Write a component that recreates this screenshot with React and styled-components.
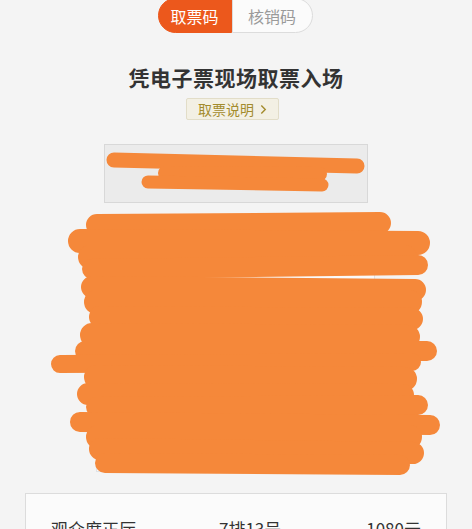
import React from "react";
import styled, { createGlobalStyle } from "styled-components";

const GlobalStyle = createGlobalStyle`
  html, body {
    margin: 0;
    padding: 0;
    overflow: hidden;
    background: #f4f4f4;
    font-family: "Noto Sans CJK SC", "Noto Sans", sans-serif;
  }
`;

// scribble strokes over the ticket codes, page coords: x1, y1, x2, y2, width
const strokes = [
  [114, 163, 357, 169, 15],
  [165, 176, 320, 177, 14],
  [148, 185, 322, 188, 13],
  [97, 228, 380, 226, 22],
  [80, 244, 418, 246, 24],
  [90, 260, 405, 260, 24],
  [92, 272, 418, 268, 20],
  [92, 290, 415, 293, 22],
  [96, 305, 410, 305, 24],
  [100, 320, 412, 322, 22],
  [92, 338, 408, 340, 24],
  [85, 354, 427, 354, 20],
  [60, 367, 412, 365, 18],
  [96, 380, 405, 382, 24],
  [88, 397, 403, 398, 22],
  [96, 410, 418, 408, 20],
  [80, 425, 430, 428, 20],
  [98, 440, 410, 440, 24],
  [100, 452, 413, 456, 22],
  [105, 466, 400, 468, 20],
];

const App = () => {
  return (
    <Page>
      <GlobalStyle />
      <Tabs>
        <Tab active>取票码</Tab>
        <Tab>核销码</Tab>
      </Tabs>
      <Title>凭电子票现场取票入场</Title>
      <HelpButton>
        取票说明
        <Chevron viewBox="0 0 8 12">
          <path d="M1.5 1.5 L6 6 L1.5 10.5" />
        </Chevron>
      </HelpButton>
      <CodeArea>
        <Barcode />
        <QrBox />
        <Scribble viewBox="0 147 472 340">
          {strokes.map(([x1, y1, x2, y2, w], i) => (
            <line key={i} x1={x1} y1={y1} x2={x2} y2={y2} strokeWidth={w} />
          ))}
        </Scribble>
      </CodeArea>
      <InfoCard>
        <Cell>观众席正厅</Cell>
        <Cell>7排13号</Cell>
        <Cell>1080元</Cell>
      </InfoCard>
    </Page>
  );
};

const Page = styled.div`
  width: 472px;
  height: 529px;
  display: flex;
  flex-direction: column;
  align-items: center;
  overflow: hidden;
`;

const Tabs = styled.div`
  display: flex;
  margin-top: -2px;
  margin-left: -2px;
`;

const Tab = styled.div`
  height: 35px;
  box-sizing: border-box;
  display: flex;
  align-items: center;
  justify-content: center;
  font-size: 16px;
  white-space: nowrap;
  width: ${(p) => (p.active ? "74px" : "81px")};
  color: ${(p) => (p.active ? "#fff" : "#9a9a9a")};
  background: ${(p) => (p.active ? "#ec581c" : "#fbfbfb")};
  border: 1px solid ${(p) => (p.active ? "#ec581c" : "#dcdcdc")};
  border-radius: ${(p) => (p.active ? "18px 0 0 18px" : "0 18px 18px 0")};
`;

const Title = styled.h1`
  margin: 31px 0 0;
  font-size: 21px;
  line-height: 26px;
  font-weight: 700;
  color: #333;
  letter-spacing: 0.5px;
`;

const HelpButton = styled.div`
  margin-top: 8px;
  margin-left: -7px;
  height: 24px;
  box-sizing: border-box;
  display: flex;
  align-items: center;
  gap: 6px;
  padding: 0 11px;
  font-size: 14px;
  color: #a38b2c;
  background: #f3f0e4;
  border: 1px solid #e2ddc8;
  border-radius: 2px;
`;

const Chevron = styled.svg`
  width: 7px;
  height: 11px;
  fill: none;
  stroke: #a38b2c;
  stroke-width: 1.6;
`;

const CodeArea = styled.div`
  position: relative;
  align-self: stretch;
  display: flex;
  flex-direction: column;
  margin-top: 24px;
`;

const Barcode = styled.div`
  width: 264px;
  height: 59px;
  margin-left: 104px;
  box-sizing: border-box;
  background: #ebebeb;
  border: 1px solid #d8d8d8;
`;

const QrBox = styled.div`
  width: 279px;
  height: 257px;
  margin: 12px 0 0 96px;
  box-sizing: border-box;
  background: #fafafa;
  border: 1px solid #dfe2e6;
`;

const Scribble = styled.svg`
  position: absolute;
  top: 0;
  left: 0;
  width: 472px;
  height: 340px;
  overflow: visible;
  stroke: #f5883a;
  stroke-linecap: round;
  fill: none;
`;

const InfoCard = styled.div`
  align-self: stretch;
  margin: 21px 25px 0;
  padding: 24px 25px;
  box-sizing: border-box;
  display: grid;
  grid-template-columns: 168px 1fr auto;
  background: #fbfbfb;
  border: 1px solid #dcdcdc;
`;

const Cell = styled.div`
  font-size: 17px;
  line-height: 22px;
  color: #333;
  font-family: "Noto Sans CJK SC", "Liberation Sans", sans-serif;
`;

export default App;
